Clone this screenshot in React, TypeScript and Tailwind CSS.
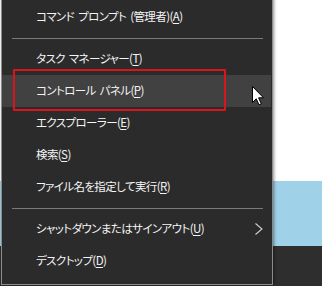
import React from "react";

type Item = { label: string; key: string; highlight?: boolean; sub?: boolean } | { sep: true };

const items: Item[] = [
  { label: "コマンド プロンプト (管理者)", key: "A" },
  { sep: true },
  { label: "タスク マネージャー", key: "T" },
  { label: "コントロール パネル", key: "P", highlight: true },
  { label: "エクスプローラー", key: "E" },
  { label: "検索", key: "S" },
  { label: "ファイル名を指定して実行", key: "R" },
  { sep: true },
  { label: "シャットダウンまたはサインアウト", key: "U", sub: true },
  { label: "デスクトップ", key: "D" },
];

export default function App() {
  return (
    <div className="relative w-[322px] h-[286px] overflow-hidden bg-[#2e2e2e]">
      {/* desktop behind */}
      <div className="flex flex-col w-full h-full">
        <div className="h-[181px] bg-white" />
        <div className="h-[65px] bg-[#9fd1e8]" />
        <div className="flex-1 bg-[#2e2e2e]" />
      </div>

      {/* menu */}
      <div
        className="absolute left-[1px] top-[-6px] w-[272px] border border-[#8c8c8c] bg-[#2b2b2b] pt-[6px] pb-[7px] shadow-[1px_0_3px_rgba(0,0,0,0.45)] text-[#f4f4f4] text-[11.5px] tracking-[-0.6px] [word-spacing:2px] [font-feature-settings:'palt'] font-['Noto_Sans_CJK_JP',sans-serif]"
      >
        {items.map((it, i) =>
          "sep" in it ? (
            <div key={i} className="h-[10px] flex items-center pl-[10px] pr-[9px]">
              <div className="h-px w-full bg-[#7a7a7a]" />
            </div>
          ) : (
            <div
              key={i}
              className={
                "relative h-[32px] flex items-center pl-[34px] mr-[1px] " +
                (it.highlight ? "bg-[#414141]" : "")
              }
            >
              <span className="whitespace-nowrap leading-none">
                {it.label}(<span className="underline underline-offset-2">{it.key}</span>)
              </span>
              {it.sub && (
                <svg
                  className="absolute left-[251px] top-[9px]"
                  width="10"
                  height="14"
                  viewBox="0 0 10 14"
                >
                  <polyline points="2.5,1.5 9,7 2.5,12.5" fill="none" stroke="#d0d0d0" strokeWidth="1.1" />
                </svg>
              )}
            </div>
          )
        )}
      </div>

      {/* red annotation box */}
      <div className="absolute left-[13px] top-[69px] w-[213px] h-[42px] border-2 border-[#d9141c] rounded-[1px]" />

      {/* mouse cursor */}
      <svg className="absolute left-[251px] top-[85px]" width="14" height="21" viewBox="0 0 14 21">
        <path
          d="M1.5 1.5 L1.5 17.5 L5.2 13.8 L8 19.8 L10.3 18.8 L7.6 12.8 L12.5 12.8 Z"
          fill="#ffffff"
          stroke="#000000"
          strokeWidth="1"
          strokeLinejoin="miter"
        />
      </svg>
    </div>
  );
}
